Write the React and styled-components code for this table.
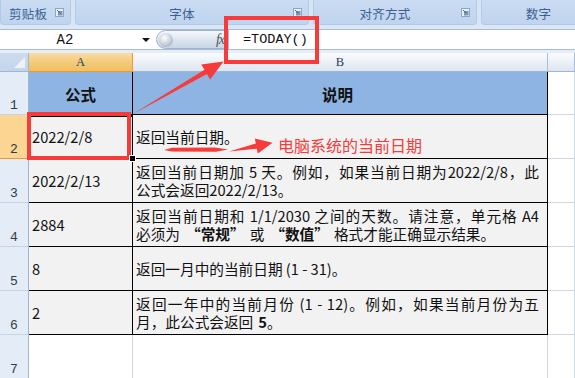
import React from 'react';
import styled, { createGlobalStyle, css } from 'styled-components';

const Global = createGlobalStyle`
  html, body { margin: 0; padding: 0; width: 575px; height: 378px; overflow: hidden; background: #fff; }
  body { font-family: "Noto Sans CJK SC", "Noto Sans", sans-serif; }
  #root { width: 575px; height: 378px; }
`;

const Page = styled.div`
  position: relative;
  width: 575px;
  height: 378px;
  overflow: hidden;
  display: flex;
  flex-direction: column;
  background: #dbe6f4;
`;

/* ---------- Ribbon ---------- */
const Ribbon = styled.div`
  height: 25px;
  flex-shrink: 0;
  display: flex;
  gap: 4px;
  background: #d7e4f4;
`;

const Group = styled.div`
  position: relative;
  flex-shrink: 0;
  width: ${p => p.$w}px;
  box-sizing: border-box;
  padding: 3px ${p => p.$pr || 0}px 0 ${p => p.$pl || 0}px;
  display: flex;
  align-items: center;
  justify-content: ${p => (p.$left ? 'flex-start' : 'center')};
  background: linear-gradient(#cadcf2, #bfd4ee);
  border: 1px solid #b3c9e5;
  border-top: none;
  border-radius: 0 0 4px 4px;
  color: #3d5f93;
  font-size: 12.5px;
  letter-spacing: 0.3px;
`;

const Launcher = styled.svg`
  position: absolute;
  right: ${p => p.$r}px;
  top: 8px;
`;

const Spacer = styled.div`
  height: ${p => p.$h}px;
  flex-shrink: 0;
  background: ${p => p.$bg};
`;

/* ---------- Formula bar ---------- */
const FormulaBar = styled.div`
  height: 21px;
  flex-shrink: 0;
  box-sizing: border-box;
  display: flex;
  align-items: stretch;
  background: #fff;
  border-top: 1px solid #a7bcd8;
  border-bottom: 1px solid #a7bcd8;
`;

const NameBox = styled.div`
  width: 138px;
  display: flex;
  align-items: center;
  justify-content: center;
  padding-right: 8px;
  box-sizing: border-box;
  font-family: "Liberation Mono", monospace;
  font-size: 14px;
  color: #111;
`;

const DropArrow = styled.div`
  width: 16px;
  display: flex;
  align-items: center;
  justify-content: center;
  &::after {
    content: '';
    border-left: 4px solid transparent;
    border-right: 4px solid transparent;
    border-top: 4px solid #111;
  }
`;

const Capsule = styled.div`
  width: 72px;
  margin: 0 0 0 2px;
  box-sizing: border-box;
  display: flex;
  align-items: center;
  justify-content: space-between;
  padding: 0 3px 0 2px;
  background: linear-gradient(#f5f8fc, #dae4f0 55%, #c9d6e6);
  border: 1px solid #9eb2cc;
  border-radius: 10px 0 0 10px;
`;

const Knob = styled.div`
  width: 14px;
  height: 14px;
  border-radius: 50%;
  background: radial-gradient(circle at 40% 35%, #ffffff, #c4ccd6 55%, #8f9aa8);
`;

const Fx = styled.span`
  font-family: "Liberation Serif", serif;
  font-style: italic;
  font-size: 14px;
  color: #555;
  letter-spacing: -1px;
`;

const FormulaInput = styled.div`
  flex: 1;
  display: flex;
  align-items: center;
  padding-left: 14px;
  border-left: 1px solid #a7bcd8;
  font-family: "Liberation Mono", monospace;
  font-size: 13.5px;
  color: #111;
`;

/* ---------- Sheet ---------- */
const Sheet = styled.div`
  flex: 1;
  display: grid;
  grid-template-columns: 29px 104px 415px 1fr;
  grid-template-rows: 19px 43px repeat(6, 44px);
  background: #fff;
`;

const Corner = styled.div`
  position: relative;
  box-sizing: border-box;
  background: linear-gradient(#cddcef, #c3d5ec);
  border-right: 1px solid #9fb6d3;
  border-bottom: 1px solid #9fb6d3;
  &::after {
    content: '';
    position: absolute;
    right: 3px;
    bottom: 3px;
    border-left: 11px solid transparent;
    border-bottom: 11px solid #eef2f7;
  }
`;

const ColHead = styled.div`
  box-sizing: border-box;
  display: flex;
  align-items: center;
  justify-content: center;
  font-family: "Liberation Serif", serif;
  font-size: 12.5px;
  color: #23405e;
  border-right: 1px solid ${p => (p.$sel ? '#f29536' : '#a9bdd6')};
  border-bottom: 1px solid ${p => (p.$sel ? '#f29536' : '#9fb6d3')};
  background: ${p => (p.$sel
    ? 'linear-gradient(#f9dba4, #f3c873 60%, #f0c160)'
    : 'linear-gradient(#fafcfe, #e9eef5 60%, #dde5ef)')};
`;

const RowHead = styled.div`
  box-sizing: border-box;
  display: flex;
  align-items: flex-end;
  justify-content: center;
  padding-bottom: 1px;
  font-family: "Liberation Mono", monospace;
  font-size: 13px;
  color: #2f3b47;
  border-right: 1px solid ${p => (p.$sel ? '#f29536' : '#9fb6d3')};
  border-bottom: 1px solid ${p => (p.$sel ? '#f29536' : '#c5d3e4')};
  background: ${p => (p.$sel ? '#fcd593' : '#e4ecf7')};
`;

const Cell = styled.div`
  box-sizing: border-box;
  display: flex;
  flex-direction: column;
  justify-content: center;
  padding: 0 ${p => p.$pr || 3}px 0 ${p => p.$pl || 3}px;
  font-size: 14.67px;
  line-height: 18px;
  color: #111;
  ${p => p.$kind === 'head' && css`
    background: #8db4e2;
    align-items: center;
    font-weight: 700;
    font-size: 15.5px;
    padding-top: 2px;
  `}
  ${p => p.$kind === 'data' && css`
    background: #f2f2f2;
  `}
  ${p => p.$kind === 'empty' && css`
    background: #fff;
  `}
  border-right: 1px solid ${p => (p.$kind === 'empty' || p.$outside ? '#d0d7e5' : '#000')};
  border-bottom: 1px solid ${p => (p.$kind === 'empty' || p.$outside ? '#d0d7e5' : '#000')};
  ${p => p.$outside && css`background: #fff;`}
  ${p => p.$active && css`box-shadow: inset 1px 1px 0 1px #000;`}
`;

const Line = styled.div`
  white-space: nowrap;
  ${p => p.$justify && css`
    text-align: justify;
    text-align-last: justify;
    white-space: normal;
  `}
`;

const Strong = styled.b`
  display: inline-block;
  font-weight: 700;
  margin: 0 ${p => p.$mr || 0}px 0 ${p => p.$ml || 0}px;
`;

/* ---------- Annotations (overlay) ---------- */
const RedBox = styled.div`
  position: absolute;
  left: ${p => p.$x}px;
  top: ${p => p.$y}px;
  width: ${p => p.$w}px;
  height: ${p => p.$h}px;
  box-sizing: border-box;
  border: 4px solid #f73a3a;
  pointer-events: none;
`;

const Overlay = styled.svg`
  position: absolute;
  left: 0;
  top: 0;
  pointer-events: none;
`;

const Note = styled.div`
  position: absolute;
  left: 278px;
  top: 134px;
  font-size: 16px;
  line-height: 22px;
  color: #f73a3a;
  white-space: nowrap;
`;

const FillHandle = styled.div`
  position: absolute;
  left: 130px;
  top: 156px;
  width: 5px;
  height: 5px;
  background: #000;
  outline: 1px solid #fff;
`;

const LaunchIcon = ({ r }) => (
  <Launcher $r={r} width="9" height="9" viewBox="0 0 9 9">
    <rect x="0.5" y="0.5" width="8" height="8" fill="#e8eef7" stroke="#8ea6c6" />
    <rect x="3" y="3" width="4.5" height="4.5" fill="#7d93b3" />
    <path d="M2 2 L5 5" stroke="#4d6488" strokeWidth="1" />
  </Launcher>
);

const rows = [
  { n: 1, kind: 'head', a: '公式', b: [<Line key="1">说明</Line>] },
  { n: 2, kind: 'data', a: '2022/2/8', active: true, b: [<Line key="1">返回当前日期。</Line>] },
  {
    n: 3, kind: 'data', a: '2022/2/13', b: [
      <Line key="1" $justify>返回当前日期加 5 天。例如，如果当前日期为2022/2/8，此</Line>,
      <Line key="2">公式会返回2022/2/13。</Line>,
    ],
  },
  {
    n: 4, kind: 'data', a: '2884', b: [
      <Line key="1" $justify>返回当前日期和 1/1/2030 之间的天数。请注意，单元格 A4</Line>,
      <Line key="2">必须为<Strong $ml={6} $mr={5}>“常规”</Strong>或<Strong $ml={6} $mr={5}>“数值”</Strong>格式才能正确显示结果。</Line>,
    ],
  },
  { n: 5, kind: 'data', a: '8', b: [<Line key="1">返回一月中的当前日期 (1 - 31)。</Line>] },
  {
    n: 6, kind: 'data', a: '2', b: [
      <Line key="1" $justify>返回一年中的当前月份 (1 - 12)。例如，如果当前月份为五</Line>,
      <Line key="2">月，此公式会返回<Strong $ml={5}>5</Strong>。</Line>,
    ],
  },
  { n: 7, kind: 'empty', a: '', b: [] },
];

export default function App() {
  return (
    <Page>
      <Global />
      <Ribbon>
        <Group $w={71} $left $pl={8}>剪贴板<LaunchIcon r={6} /></Group>
        <Group $w={234} $pr={20}>字体<LaunchIcon r={6} /></Group>
        <Group $w={164} $pr={20}>对齐方式<LaunchIcon r={6} /></Group>
        <Group $w={115}>数字</Group>
      </Ribbon>
      <Spacer $h={4} $bg="#dce7f5" />
      <FormulaBar>
        <NameBox>A2</NameBox>
        <DropArrow />
        <Capsule>
          <Knob />
          <Fx>fx</Fx>
        </Capsule>
        <FormulaInput>=TODAY()</FormulaInput>
      </FormulaBar>
      <Spacer $h={3} $bg="#e6edf6" />
      <Sheet>
        <Corner />
        <ColHead $sel>A</ColHead>
        <ColHead>B</ColHead>
        <ColHead />
        {rows.map(r => (
          <React.Fragment key={r.n}>
            <RowHead $sel={r.n === 2}>{r.n}</RowHead>
            <Cell $kind={r.kind} $active={r.active}>
              {r.kind === 'head' ? r.a : <Line>{r.a}</Line>}
            </Cell>
            <Cell $kind={r.kind} $pr={8}>{r.b}</Cell>
            <Cell $kind={r.kind} $outside />
          </React.Fragment>
        ))}
      </Sheet>

      <RedBox $x={27} $y={112} $w={104} $h={48} />
      <RedBox $x={224} $y={16} $w={95} $h={48} />
      <FillHandle />
      <Overlay width="575" height="378" viewBox="0 0 575 378">
        <polygon
          points="133,114 206.9,74.1 210.2,79.4 223.5,61.5 201.2,64.4 204.5,69.7"
          fill="#f73a3a"
        />
        <polygon
          points="164,150 172,147.8 215,147.6 228,149.5 216,151.8 172,151.6"
          fill="#f73a3a"
        />
        <polygon
          points="229,151.5 256.8,148.7 257.8,153.4 272.5,142.8 254.8,138.6 255.8,143.6"
          fill="#f73a3a"
        />
      </Overlay>
      <Note>电脑系统的当前日期</Note>
    </Page>
  );
}
